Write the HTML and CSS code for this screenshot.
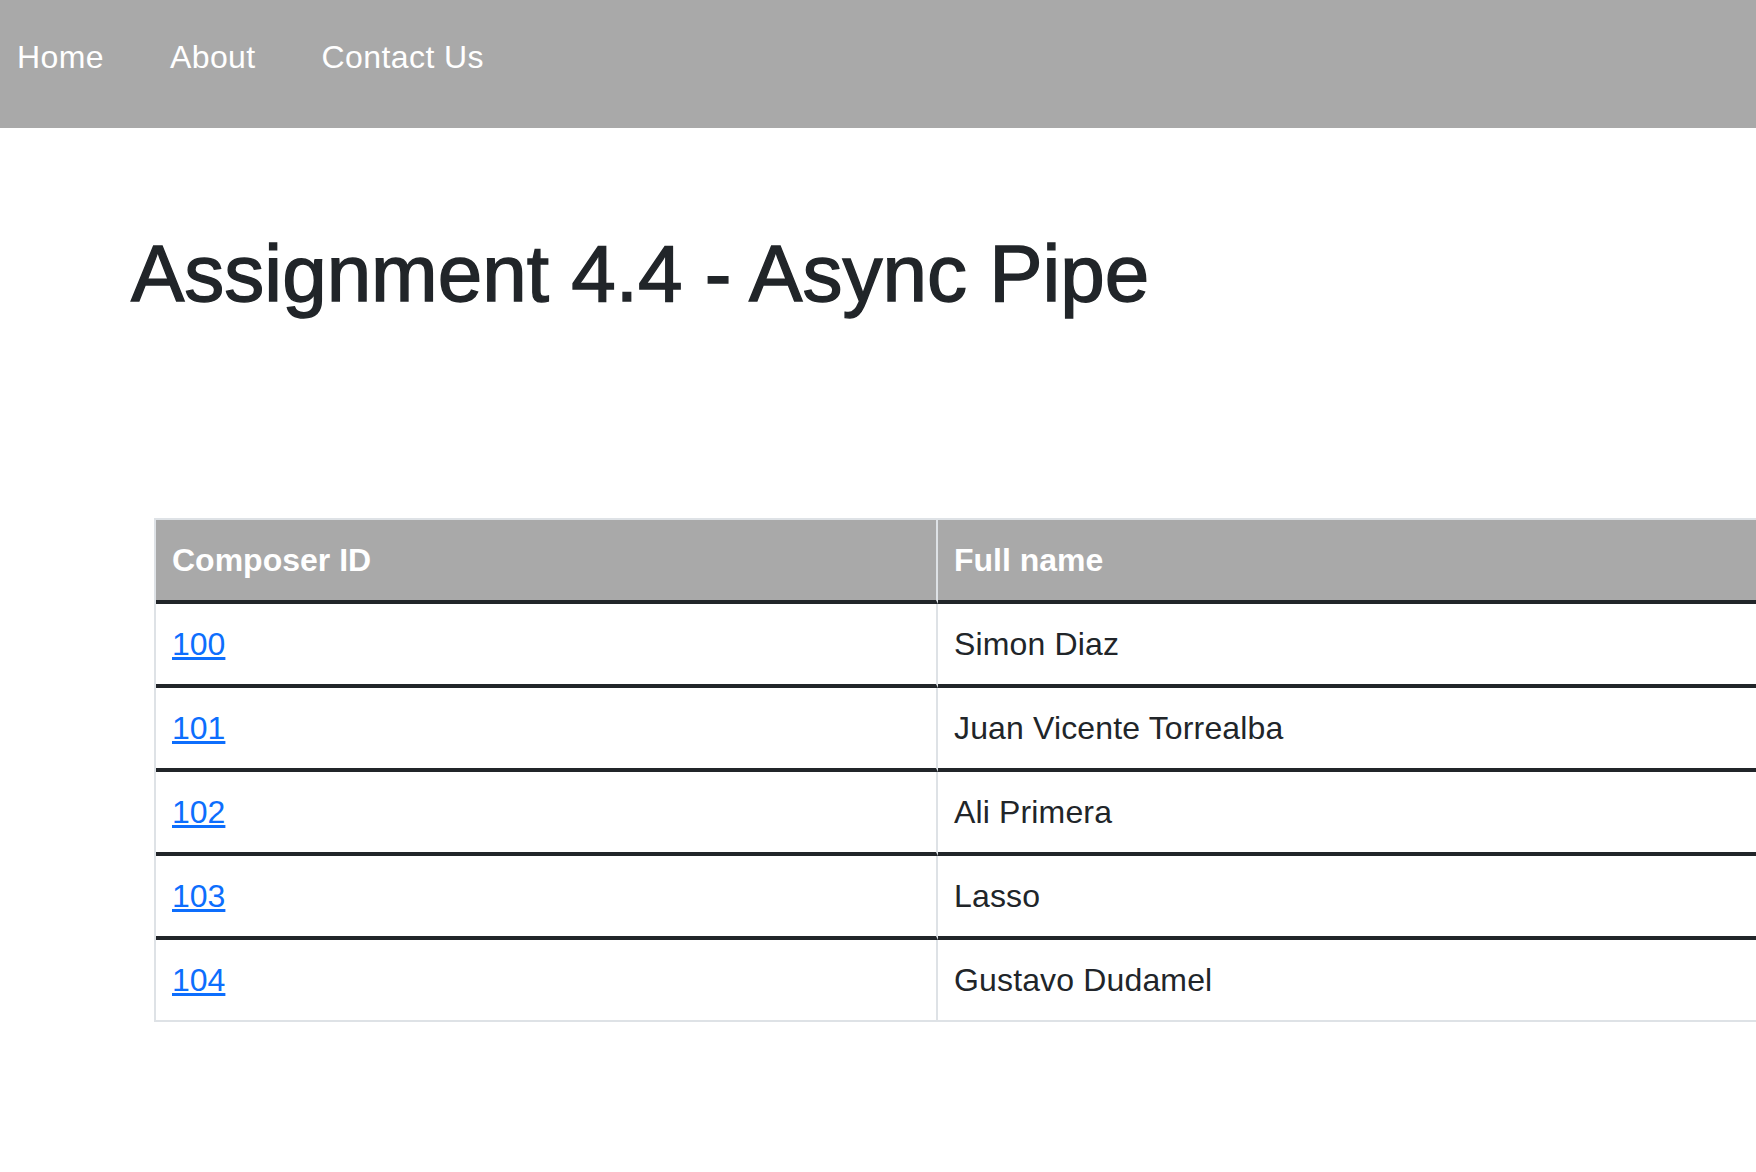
FILE: index.html
```html
<!DOCTYPE html>
<html lang="en">
<head>
<meta charset="utf-8">
<title>Assignment 4.4 - Async Pipe</title>
<link rel="stylesheet" href="styles.css">
</head>
<body>
<nav class="navbar">
  <a class="nav-link" href="#">Home</a>
  <a class="nav-link" href="#">About</a>
  <a class="nav-link" href="#">Contact Us</a>
</nav>
<main class="content">
  <h1 class="page-title">Assignment 4.4 - Async Pipe</h1>
  <table class="composers">
    <colgroup>
      <col class="col-id">
      <col class="col-name">
    </colgroup>
    <thead>
      <tr><th>Composer ID</th><th>Full name</th></tr>
    </thead>
    <tbody>
      <tr><td><a href="#">100</a></td><td>Simon Diaz</td></tr>
      <tr><td><a href="#">101</a></td><td>Juan Vicente Torrealba</td></tr>
      <tr><td><a href="#">102</a></td><td>Ali Primera</td></tr>
      <tr><td><a href="#">103</a></td><td>Lasso</td></tr>
      <tr><td><a href="#">104</a></td><td>Gustavo Dudamel</td></tr>
    </tbody>
  </table>
</main>
</body>
</html>
```
FILE: styles.css
```css
html, body {
  margin: 0;
  padding: 0;
  overflow: hidden;
}
body {
  font-family: "Liberation Sans", Arial, sans-serif;
  font-size: 32px;
  line-height: 48px;
  color: #212529;
  background: #ffffff;
}
.navbar {
  display: flex;
  gap: 66px;
  height: 128px;
  box-sizing: border-box;
  padding: 33px 0 0 17px;
  background: #a9a9a9;
}
.nav-link {
  color: #ffffff;
  text-decoration: none;
  letter-spacing: 0.4px;
}
.content {
  padding: 98px 0 0 0;
}
.page-title {
  margin: 0 0 196px 131px;
  font-size: 80px;
  line-height: 96px;
  font-weight: 400;
  -webkit-text-stroke: 1.4px #212529;
  color: #212529;
}
.composers {
  margin-left: 154px;
  width: 1602px;
  table-layout: fixed;
  border-collapse: separate;
  border-spacing: 0;
  border-top: 2px solid #dee2e6;
  border-left: 2px solid #dee2e6;
}
.col-id {
  width: 782px;
}
.composers th,
.composers td {
  padding: 16px;
  text-align: left;
  border-right: 2px solid #dee2e6;
  border-bottom: 4px solid #212529;
  vertical-align: top;
}
.composers th:last-child,
.composers td:last-child {
  border-right: none;
}
.composers th {
  background: #a9a9a9;
  color: #ffffff;
  font-weight: 700;
}
.composers tbody tr:last-child td {
  border-bottom: 2px solid #dee2e6;
}
.composers td:last-child {
  letter-spacing: 0.15px;
}
.composers a {
  color: #0d6efd;
  text-decoration: underline;
}
```
